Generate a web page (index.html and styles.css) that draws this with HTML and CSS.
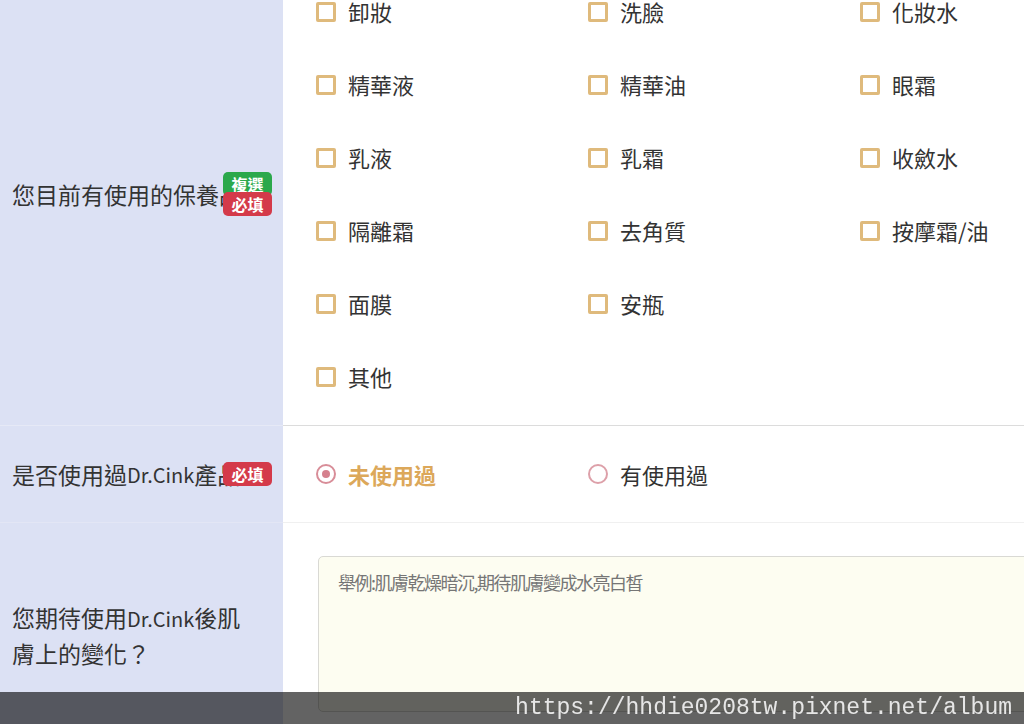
FILE: index.html
```html
<!DOCTYPE html>
<html lang="zh-Hant">
<head>
    <meta charset="UTF-8">
    <meta name="viewport" content="width=device-width, initial-scale=1.0">
    <title>問卷</title>
    <link rel="stylesheet" href="styles.css">
</head>
<body>
    <form class="survey" action="#" method="post">
        <div class="row row-first">
            <div class="label label-first">
                您目前有使用的保養品
                <span class="badges">
                    <span class="badge badge-green">複選</span>
                    <span class="badge badge-red">必填</span>
                </span>
            </div>
            <div class="field">
                <div class="options">
                    <label class="option"><span class="check"></span>卸妝</label>
                    <label class="option"><span class="check"></span>洗臉</label>
                    <label class="option"><span class="check"></span>化妝水</label>
                    <label class="option"><span class="check"></span>精華液</label>
                    <label class="option"><span class="check"></span>精華油</label>
                    <label class="option"><span class="check"></span>眼霜</label>
                    <label class="option"><span class="check"></span>乳液</label>
                    <label class="option"><span class="check"></span>乳霜</label>
                    <label class="option"><span class="check"></span>收斂水</label>
                    <label class="option"><span class="check"></span>隔離霜</label>
                    <label class="option"><span class="check"></span>去角質</label>
                    <label class="option"><span class="check"></span>按摩霜/油</label>
                    <label class="option"><span class="check"></span>面膜</label>
                    <label class="option"><span class="check"></span>安瓶</label>
                    <span class="option"></span>
                    <label class="option"><span class="check"></span>其他</label>
                </div>
            </div>
        </div>

        <div class="row row-second">
            <div class="label">
                是否使用過<span class="latin">Dr.Cink</span>產品
                <span class="badges">
                    <span class="badge badge-red">必填</span>
                </span>
            </div>
            <div class="field field-radio">
                <div class="options">
                    <label class="option option-checked"><span class="radio radio-checked"></span>未使用過</label>
                    <label class="option"><span class="radio"></span>有使用過</label>
                </div>
            </div>
        </div>

        <div class="row row-third">
            <div class="label label-wrap">您期待使用<span class="latin">Dr.Cink</span>後肌膚上的變化？</div>
            <div class="field field-text">
                <textarea class="answer" placeholder="舉例:肌膚乾燥暗沉,期待肌膚變成水亮白皙"></textarea>
            </div>
        </div>
    </form>

    <div class="watermark">https://hhdie0208tw.pixnet.net/album</div>
</body>
</html>
```
FILE: styles.css
```css
body {
    font-family: "Noto Sans CJK TC", "Noto Sans", sans-serif;
    background-color: #fff;
    color: #333;
    margin: 0;
    padding: 0;
    overflow: hidden;
    height: 724px;
}

.survey {
    margin-top: -26px;
}

.row {
    display: grid;
    grid-template-columns: 283px 1fr;
}

.label {
    position: relative;
    display: flex;
    align-items: center;
    padding: 0 12px;
    background-color: #dce1f4;
    font-size: 23px;
    white-space: nowrap;
    overflow: hidden;
}

.latin {
    font-size: 20px;
}

.label-first {
    padding-bottom: 12px;
}

.label-wrap {
    display: block;
    white-space: normal;
    line-height: 34px;
    padding: 77px 30px 0 12px;
    box-sizing: border-box;
}

.badges {
    position: absolute;
    right: 11px;
    top: 50%;
    transform: translateY(-50%);
    display: flex;
    flex-direction: column;
}

.label-first .badges {
    margin-top: -6px;
}

.badge {
    width: 49px;
    height: 24px;
    line-height: 24px;
    border-radius: 5px;
    color: #fff;
    font-size: 16px;
    font-weight: bold;
    text-align: center;
}

.badge-green {
    background-color: #2ba84b;
}

.badge-red {
    background-color: #d43a4a;
}

.badge-green + .badge-red {
    margin-top: -4px;
}

.field {
    padding-left: 33px;
}

.row-first .label {
    border-bottom: 1px solid #e6e9f6;
}

.row-first .field {
    padding-bottom: 13px;
    border-bottom: 1px solid #dcdcdc;
}

.row-second .label {
    border-bottom: 1px solid #e3e6f5;
}

.row-second .field {
    border-bottom: 1px solid #f0f0f0;
}

.options {
    display: grid;
    grid-template-columns: repeat(3, 272px);
    grid-auto-rows: 73px;
    font-size: 22px;
}

.option {
    display: flex;
    align-items: center;
}

.check {
    width: 20px;
    height: 20px;
    box-sizing: border-box;
    border: 3px solid #dfba7c;
    border-radius: 2px;
    margin-right: 12px;
    margin-bottom: -2px;
}

.field-radio {
    height: 96px;
    display: flex;
    align-items: center;
}

.field-radio .options {
    grid-auto-rows: auto;
}

.radio {
    width: 20px;
    height: 20px;
    box-sizing: border-box;
    border: 2px solid #dda0a9;
    border-radius: 50%;
    margin-right: 12px;
    display: flex;
    align-items: center;
    justify-content: center;
}

.radio-checked {
    border-color: #d88d98;
}

.radio-checked::after {
    content: "";
    width: 8px;
    height: 8px;
    border-radius: 50%;
    background-color: #d5808d;
}

.option-checked {
    color: #dca85a;
    font-weight: bold;
}

.row-third .label {
    height: 226px;
}

.field-text {
    padding: 33px 0 0 35px;
}

.answer {
    width: 760px;
    height: 156px;
    box-sizing: border-box;
    padding: 12px 19px;
    background-color: #fdfdf1;
    border: 1px solid #d9d9d4;
    border-radius: 5px;
    font-family: "Noto Sans CJK TC", sans-serif;
    font-size: 18px;
    letter-spacing: -1.5px;
    resize: none;
}

.answer::placeholder {
    color: #767676;
}

.watermark {
    position: fixed;
    left: 0;
    right: 0;
    bottom: 0;
    height: 32px;
    line-height: 32px;
    padding-right: 12px;
    background-color: rgba(0, 0, 0, 0.61);
    color: #e6e6e6;
    font-family: "Liberation Mono", monospace;
    font-size: 23px;
    text-align: right;
}
```
